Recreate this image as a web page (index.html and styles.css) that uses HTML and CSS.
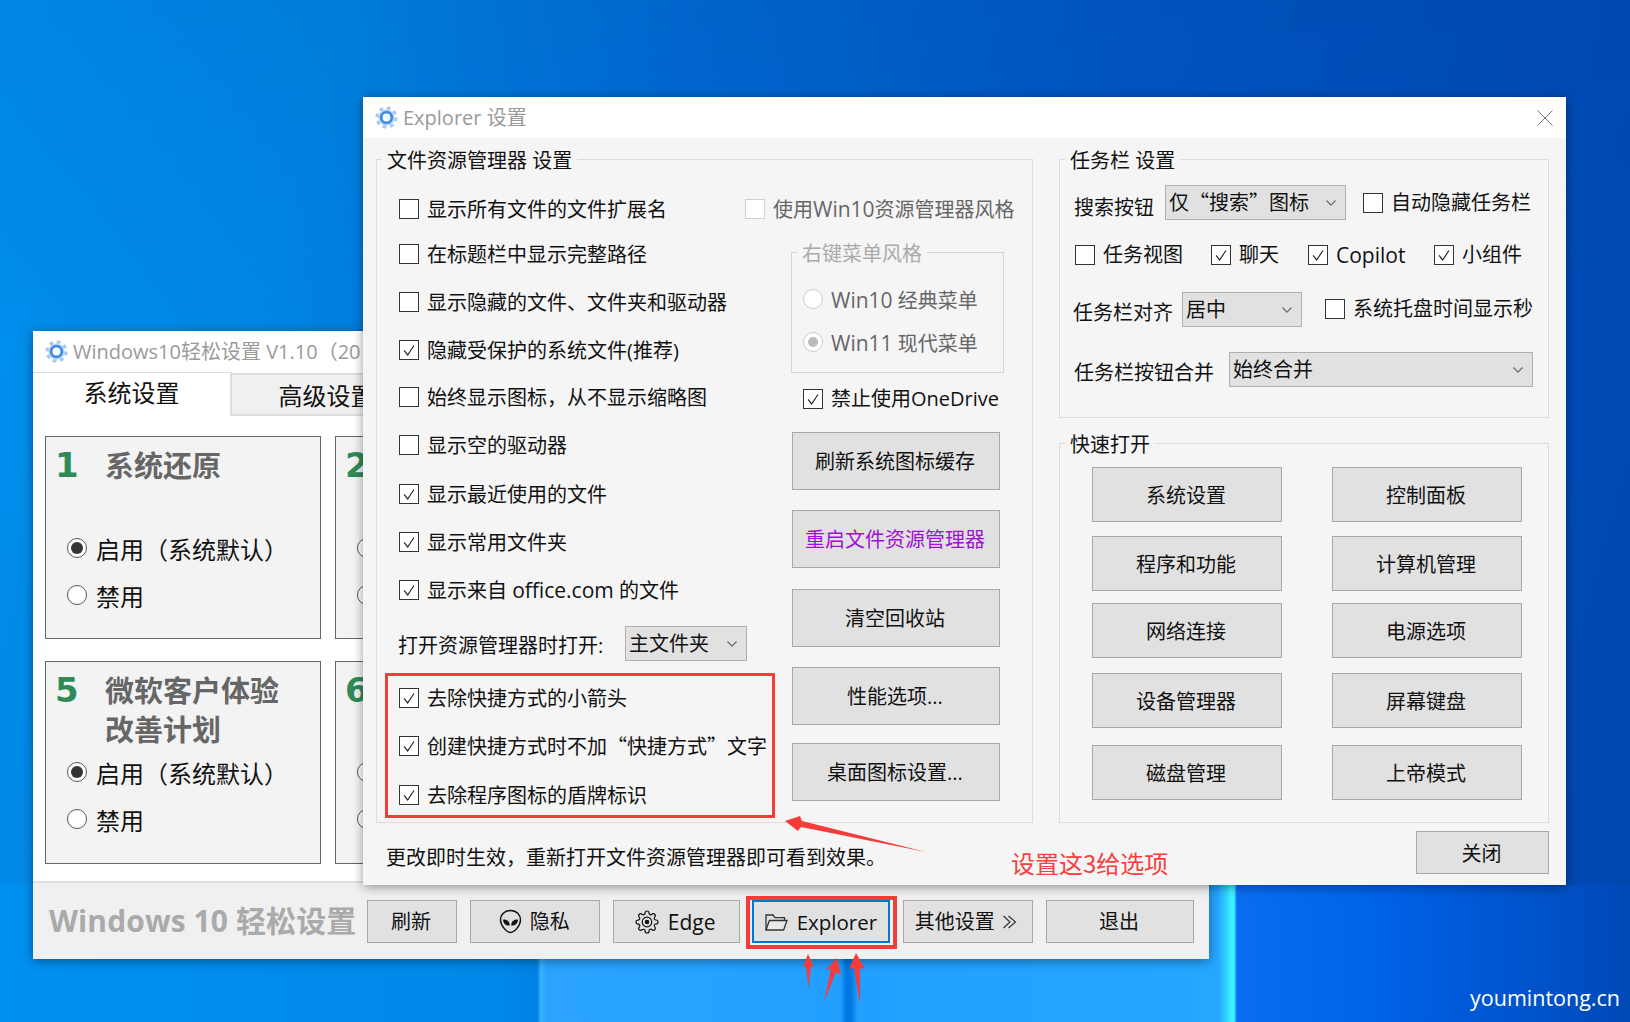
FILE: index.html
```html
<!DOCTYPE html>
<html lang="zh-CN">
<head>
<meta charset="utf-8">
<title>Explorer 设置</title>
<link rel="stylesheet" href="styles.css">
</head>
<body>
<svg class="defs" aria-hidden="true">
  <symbol id="logo" viewBox="0 0 24 24">
    <circle cx="12" cy="12" r="9.4" fill="none" stroke="#a9c8f2" stroke-width="4.4" stroke-dasharray="3.7 3.68"/>
    <circle cx="12" cy="12" r="8.6" fill="#c4d9f6"/>
    <circle cx="12" cy="12" r="5.6" fill="#fff" stroke="#3d8ee8" stroke-width="3"/>
    <circle cx="12" cy="12" r="3" fill="#f2f8ff"/>
  </symbol>
  <symbol id="tick" viewBox="0 0 20 20">
    <path d="M4.5 10.5 8.5 15.5 15.5 5" fill="none" stroke="#222" stroke-width="1.3"/>
  </symbol>
  <symbol id="chev" viewBox="0 0 12 8">
    <path d="M1.5 1.5 6 6.2 10.5 1.5" fill="none" stroke="#666" stroke-width="1.1"/>
  </symbol>
</svg>

<main class="desktop">

  <section class="window back">
    <header class="titlebar">
      <svg class="logo"><use href="#logo"/></svg>
      <span class="title-text">Windows10轻松设置 V1.10（20</span>
    </header>
    <nav class="tabs">
      <div class="tab active">系统设置</div>
      <div class="tab">高级设置</div>
    </nav>
    <div class="cards">
      <article class="card">
        <div class="card-head"><span class="num">1</span><h2>系统还原</h2></div>
        <div class="options">
          <div class="opt"><span class="dot on"></span>启用（系统默认）</div>
          <div class="opt"><span class="dot"></span>禁用</div>
        </div>
      </article>
      <article class="card">
        <div class="card-head"><span class="num">2</span></div>
        <div class="options">
          <div class="opt"><span class="dot"></span></div>
          <div class="opt"><span class="dot"></span></div>
        </div>
      </article>
      <article class="card">
        <div class="card-head"><span class="num">5</span><h2>微软客户体验<br>改善计划</h2></div>
        <div class="options tight">
          <div class="opt"><span class="dot on"></span>启用（系统默认）</div>
          <div class="opt"><span class="dot"></span>禁用</div>
        </div>
      </article>
      <article class="card">
        <div class="card-head"><span class="num">6</span></div>
        <div class="options tight">
          <div class="opt"><span class="dot"></span></div>
          <div class="opt"><span class="dot"></span></div>
        </div>
      </article>
    </div>
    <footer class="bar">
      <div class="brand">Windows 10 轻松设置</div>
      <div class="bar-buttons">
        <button class="btn w-refresh">刷新</button>
        <button class="btn w-privacy">
          <svg class="ico" viewBox="0 0 24 24"><path d="M12 1.5C6.2 1.5 2.4 5.4 2.4 10.6c0 5.4 6 11.9 9.6 11.9s9.6-6.5 9.6-11.9c0-5.2-3.8-9.1-9.6-9.1z" fill="none" stroke="#111" stroke-width="1.4"/><path d="M4.9 10.2c3.8-.3 6.4 1.8 6.4 5.6-3.8.2-6.4-1.9-6.4-5.6zM19.1 10.2c-3.8-.3-6.4 1.8-6.4 5.6 3.8.2 6.4-1.9 6.4-5.6z" fill="#111"/></svg>
          隐私</button>
        <button class="btn w-edge">
          <svg class="ico gear" viewBox="0 0 24 24" fill="none" stroke="#111" stroke-width="1.2"><circle cx="12" cy="12" r="4.8"/><circle cx="12" cy="12" r="1.7" fill="#111"/><path d="M19.4 15a1.65 1.65 0 0 0 .33 1.82l.06.06a2 2 0 0 1 0 2.83 2 2 0 0 1-2.83 0l-.06-.06a1.65 1.65 0 0 0-1.82-.33 1.65 1.65 0 0 0-1 1.51V21a2 2 0 0 1-2 2 2 2 0 0 1-2-2v-.09A1.65 1.65 0 0 0 9 19.4a1.65 1.65 0 0 0-1.82.33l-.06.06a2 2 0 0 1-2.83 0 2 2 0 0 1 0-2.83l.06-.06a1.65 1.65 0 0 0 .33-1.82 1.65 1.65 0 0 0-1.51-1H3a2 2 0 0 1-2-2 2 2 0 0 1 2-2h.09A1.65 1.65 0 0 0 4.6 9a1.65 1.65 0 0 0-.33-1.82l-.06-.06a2 2 0 0 1 0-2.83 2 2 0 0 1 2.83 0l.06.06a1.65 1.65 0 0 0 1.82.33H9a1.65 1.65 0 0 0 1-1.51V3a2 2 0 0 1 2-2 2 2 0 0 1 2 2v.09a1.65 1.65 0 0 0 1 1.51 1.65 1.65 0 0 0 1.82-.33l.06-.06a2 2 0 0 1 2.83 0 2 2 0 0 1 0 2.83l-.06.06a1.65 1.65 0 0 0-.33 1.82V9a1.65 1.65 0 0 0 1.51 1H21a2 2 0 0 1 2 2 2 2 0 0 1-2 2h-.09a1.65 1.65 0 0 0-1.51 1z"/></svg>
          <span class="lat">Edge</span></button>
        <button class="btn w-explorer focus">
          <svg class="ico folder" viewBox="0 0 24 20" fill="none" stroke="#333" stroke-width="1.3"><path d="M2 18V3h7l2 2.6h9.5V8.5"/><path d="M2 18 5.4 8.5H23L19.6 18z" fill="#e8e8e8"/></svg>
          <span class="lat narrow">Explorer</span></button>
        <button class="btn w-other">其他设置
          <svg class="ico more" viewBox="0 0 16 14" fill="none" stroke="#333" stroke-width="1.2"><path d="M1.5 1 8 7 1.5 13M6.5 1 13.5 7 6.5 13"/></svg>
        </button>
        <button class="btn w-exit">退出</button>
      </div>
    </footer>
  </section>

  <section class="window front">
    <header class="titlebar">
      <svg class="logo"><use href="#logo"/></svg>
      <span class="title-text">Explorer 设置</span>
      <svg class="close-x" viewBox="0 0 16 16"><path d="M.5.5 15.5 15.5M15.5.5.5 15.5" stroke="#777" fill="none"/></svg>
    </header>
    <div class="front-body">
      <fieldset class="group explorer-group">
        <legend>文件资源管理器 设置</legend>
        <div class="explorer-cols">
          <div class="option-list">
            <label class="check"><span class="box"></span><span>显示所有文件的文件扩展名</span></label>
            <label class="check"><span class="box"></span><span>在标题栏中显示完整路径</span></label>
            <label class="check"><span class="box"></span><span>显示隐藏的文件、文件夹和驱动器</span></label>
            <label class="check"><span class="box"><svg><use href="#tick"/></svg></span><span>隐藏受保护的系统文件(推荐)</span></label>
            <label class="check"><span class="box"></span><span>始终显示图标，从不显示缩略图</span></label>
            <label class="check"><span class="box"></span><span>显示空的驱动器</span></label>
            <label class="check"><span class="box"><svg><use href="#tick"/></svg></span><span>显示最近使用的文件</span></label>
            <label class="check"><span class="box"><svg><use href="#tick"/></svg></span><span>显示常用文件夹</span></label>
            <label class="check flat"><span class="box"><svg><use href="#tick"/></svg></span><span>显示来自 <span class="lat">office.com</span> 的文件</span></label>
            <div class="open-row">
              <span class="open-label">打开资源管理器时打开:</span>
              <div class="select w-open">主文件夹<svg class="chev"><use href="#chev"/></svg></div>
            </div>
            <label class="check"><span class="box"><svg><use href="#tick"/></svg></span><span>去除快捷方式的小箭头</span></label>
            <label class="check flat"><span class="box"><svg><use href="#tick"/></svg></span><span>创建快捷方式时不加<span class="cjk">“</span>快捷方式<span class="cjk">”</span>文字</span></label>
            <label class="check"><span class="box"><svg><use href="#tick"/></svg></span><span>去除程序图标的盾牌标识</span></label>
          </div>
          <div class="side-col">
            <label class="check disabled flat"><span class="box"></span><span>使用<span class="lat">Win10</span>资源管理器风格</span></label>
            <fieldset class="group menu-style">
              <legend>右键菜单风格</legend>
              <div class="radio-row"><span class="dot"></span><span><span class="lat">Win10</span> 经典菜单</span></div>
              <div class="radio-row"><span class="dot on"></span><span><span class="lat">Win11</span> 现代菜单</span></div>
            </fieldset>
            <label class="check onedrive flat"><span class="box"><svg><use href="#tick"/></svg></span><span>禁止使用OneDrive</span></label>
            <div class="tool-stack">
              <button class="btn">刷新系统图标缓存</button>
              <button class="btn purple">重启文件资源管理器</button>
              <button class="btn">清空回收站</button>
              <button class="btn">性能选项...</button>
              <button class="btn">桌面图标设置...</button>
            </div>
          </div>
        </div>
      </fieldset>

      <div class="right-col">
        <fieldset class="group taskbar-group">
          <legend>任务栏 设置</legend>
          <div class="tb-row r1">
            <span class="tb-label">搜索按钮</span>
            <div class="select w-search"><span>仅<span class="cjk">“</span>搜索<span class="cjk">”</span>图标</span><svg class="chev"><use href="#chev"/></svg></div>
            <label class="check autohide"><span class="box"></span><span>自动隐藏任务栏</span></label>
          </div>
          <div class="tb-row r2">
            <label class="check"><span class="box"></span><span>任务视图</span></label>
            <label class="check"><span class="box"><svg><use href="#tick"/></svg></span><span>聊天</span></label>
            <label class="check"><span class="box"><svg><use href="#tick"/></svg></span><span class="lat">Copilot</span></label>
            <label class="check"><span class="box"><svg><use href="#tick"/></svg></span><span>小组件</span></label>
          </div>
          <div class="tb-row r3">
            <span class="tb-label">任务栏对齐</span>
            <div class="select w-align">居中<svg class="chev"><use href="#chev"/></svg></div>
            <label class="check seconds"><span class="box"></span><span>系统托盘时间显示秒</span></label>
          </div>
          <div class="tb-row r4">
            <span class="tb-label">任务栏按钮合并</span>
            <div class="select w-merge">始终合并<svg class="chev"><use href="#chev"/></svg></div>
          </div>
        </fieldset>
        <fieldset class="group quick-group">
          <legend>快速打开</legend>
          <div class="quick-grid">
            <button class="btn">系统设置</button><button class="btn">控制面板</button>
            <button class="btn">程序和功能</button><button class="btn">计算机管理</button>
            <button class="btn">网络连接</button><button class="btn">电源选项</button>
            <button class="btn">设备管理器</button><button class="btn">屏幕键盘</button>
            <button class="btn">磁盘管理</button><button class="btn">上帝模式</button>
          </div>
        </fieldset>
      </div>

      <p class="status">更改即时生效，重新打开文件资源管理器即可看到效果。</p>
      <div class="close-wrap"><button class="btn w-close">关闭</button></div>
    </div>
  </section>

  <svg class="marks" viewBox="0 0 1630 1022" aria-hidden="true">
    <rect x="386.5" y="674.5" width="387" height="142" fill="none" stroke="#f63b3b" stroke-width="3"/>
    <rect x="748" y="898" width="147" height="49" fill="none" stroke="#f63b3b" stroke-width="4"/>
    <polygon fill="#f63b3b" points="785,821 800,816 802,821 926,852 801,827 798,831"/>
    <polygon fill="#f63b3b" points="808,954 814,967 811,966 808.5,989 806,966 803,967"/>
    <polygon fill="#f63b3b" points="837,958 841,975 836,972 824,1002 831,969 826,970"/>
    <polygon fill="#f63b3b" points="856,953 865,969 860,968 860,1004 854,968 849,969"/>
  </svg>
  <div class="note">设置这3给选项</div>
  <div class="watermark">youmintong.cn</div>
</main>
</body>
</html>
```

FILE: styles.css
```css
* { box-sizing: border-box; }
html, body { margin: 0; padding: 0; }
body {
  font-family: "Open Sans", "Noto Sans CJK SC", sans-serif;
  font-size: 20px;
  line-height: 28px;
  color: #111;
}
.defs { position: absolute; width: 0; height: 0; }
.cjk { font-family: "Noto Sans CJK SC", sans-serif; }
.lat { font-size: 21px; }
.lat.narrow { font-size: 20.5px; }

/* desktop */
.desktop {
  position: relative;
  width: 1630px;
  height: 1022px;
  overflow: hidden;
  background:
    linear-gradient(90deg,
      #0090f0 0, #0088e8 500px, #0080e2 537px, #38b4ff 541px, #2aa4ff 546px,
      #22a0ff 840px, #0078e2 846px, #0078e2 851px, #22a0ff 858px,
      #25a6ff 1218px, #30d0ff 1226px, #3ff0ff 1231px, #3ff0ff 1234px, #0a6cf0 1237px,
      #0062e8 1380px, #0049b8 1630px) left bottom / 100% 137px no-repeat,
    linear-gradient(180deg, rgba(0, 40, 130, .1) 0, rgba(0, 40, 130, 0) 340px),
    linear-gradient(105deg, #0090ee 0, #0086e4 18%, #006cd4 36%, #0058c4 58%, #004eba 80%, #0046b0 100%);
}
.window {
  position: absolute;
  box-shadow: 0 2px 10px rgba(0, 0, 0, .4);
}
.back {
  left: 33px; top: 331px; width: 1176px; height: 628px;
  background: #fff;
  overflow: hidden;
}
.front {
  left: 363px; top: 97px; width: 1203px; height: 788px;
  background: #f5f5f5;
}

/* title bars */
.titlebar {
  display: flex;
  align-items: center;
  height: 41px;
  padding: 0 13px 0 12px;
  background: #fff;
}
.logo { width: 23px; height: 23px; flex: none; }
.title-text { margin-left: 5px; color: #9a9a9a; white-space: nowrap; }
.close-x { width: 16px; height: 16px; margin-left: auto; }

/* back window */
.tabs { display: flex; height: 44px; }
.tab {
  width: 199px;
  font-size: 24px;
  text-align: center;
  padding: 7px 10px 0 0;
  background: #f0f0f0;
  border-top: 2px solid #ddd;
  border-bottom: 2px solid #ddd;
  margin-top: 1px;
}
.tab.active {
  background: #fff;
  margin-top: 0;
  border-top: 1px solid #ddd;
  border-right: 2px solid #ddd;
  border-bottom: 0;
  padding: 6px 0 0;
}
.cards {
  display: grid;
  grid-template-columns: 276px 276px;
  grid-template-rows: 203px 203px;
  column-gap: 14px;
  row-gap: 22px;
  height: 465px;
  padding: 20px 0 0 12px;
}
.card {
  background: #f3f3f3;
  border: 1px solid #666;
  padding-top: 10px;
}
.card-head {
  display: flex;
  min-height: 78px;
  padding-left: 9px;
}
.num {
  width: 50px;
  flex: none;
  margin-top: -1px;
  font-family: "DejaVu Sans", sans-serif;
  font-size: 34px;
  font-weight: 700;
  line-height: 39px;
  color: #2e8b57;
}
.card h2 {
  margin: -2px 0 0;
  font-family: "Noto Sans CJK SC", sans-serif;
  font-size: 29px;
  line-height: 39px;
  font-weight: 700;
  color: #666;
}
.options { display: flex; flex-direction: column; gap: 17px; margin-top: 10px; padding-left: 21px; }
.options.tight { margin-top: 9px; }
.opt {
  display: flex;
  align-items: center;
  height: 30px;
  gap: 9px;
  font-size: 24px;
  white-space: nowrap;
}
.opt .dot { margin-bottom: 4px; }
.dot {
  position: relative;
  flex: none;
  width: 20px;
  height: 20px;
  border: 1px solid #555;
  border-radius: 50%;
  background: #fff;
}
.dot.on::after {
  content: "";
  position: absolute;
  inset: 3px;
  border-radius: 50%;
  background: #333;
}
.bar {
  display: flex;
  height: 78px;
  padding: 17px 15px 0 16px;
  background: #f0f0f0;
  border-top: 2px solid #ddd;
}
.brand {
  font-size: 30px;
  font-weight: 700;
  line-height: 42px;
  color: #aaa;
  white-space: nowrap;
  letter-spacing: .1px;
}
.bar-buttons { display: flex; gap: 12.8px; height: 43px; margin-left: auto; }

/* buttons */
.btn {
  display: flex;
  align-items: center;
  justify-content: center;
  gap: 9px;
  margin: 0;
  padding: 2px 2px 0 0;
  font: inherit;
  color: #111;
  background: #e1e1e1;
  border: 1px solid #a8a8a8;
  white-space: nowrap;
}
.bar-buttons .btn { padding-top: 0; }
.w-refresh { width: 90px; }
.w-privacy { width: 130px; gap: 7px; }
.w-edge { width: 127px; }
.w-explorer { width: 138px; }
.bar-buttons .w-other { width: 130px; gap: 7px; padding-right: 4px; }
.w-exit { width: 148px; }
.w-close { width: 133px; height: 43px; }
.bar-buttons .focus { border: 2px solid #0078d7; }
.tool-stack .purple { color: #a010d8; }
.ico { width: 25px; height: 25px; flex: none; }
.ico.gear { width: 24px; height: 24px; }
.ico.folder { height: 20px; width: 24px; }
.ico.more { width: 16px; height: 14px; }

/* front window */
.front-body {
  display: grid;
  grid-template-columns: 657px 490px;
  grid-template-rows: 678px auto;
  column-gap: 26px;
  height: 747px;
  padding: 7px 0 0 13px;
}
.group {
  margin: 0;
  padding: 0;
  min-width: 0;
  border: 1px solid #dcdcdc;
}
.group > legend {
  height: 28px;
  margin-left: 5px;
  padding: 2px 5px 0;
  line-height: 28px;
  white-space: nowrap;
}
.explorer-cols {
  display: grid;
  grid-template-columns: 346px 1fr;
  padding: 22px 0 0 22px;
}
.check {
  display: flex;
  align-items: center;
  gap: 8px;
  height: 28px;
  white-space: nowrap;
}
.explorer-cols .check > span:last-child,
.radio-row > span:last-child { padding-top: 2px; }
.explorer-cols .check.flat > span:last-child { padding-top: 0; }
.box {
  flex: none;
  width: 20px;
  height: 20px;
  background: #fff;
  border: 1px solid #333;
}
.box svg { display: block; width: 18px; height: 18px; }
.option-list {
  display: grid;
  grid-template-rows: 45px 48px 48px 47px 48px 49px 48px 48px 56px 52px 48px 49px 28px;
  align-items: start;
}
.open-row { display: flex; align-items: center; height: 28px; margin-left: -1px; }
.open-label { width: 227px; white-space: nowrap; }
.select {
  display: flex;
  align-items: center;
  flex: none;
  height: 35px;
  padding: 0 8px 0 3px;
  background: #e1e1e1;
  border: 1px solid #b0b0b0;
  white-space: nowrap;
}
.chev { width: 12px; height: 8px; margin-left: auto; }
.open-row .w-open { width: 122px; margin-top: -5px; }
.w-search { width: 181px; }
.w-align { width: 120px; }
.w-merge { width: 304px; }
.disabled { color: #666; }
.disabled .box { border-color: #d0d0d0; }
.side-col { display: flex; flex-direction: column; }
.menu-style {
  width: 213px;
  height: 135px;
  margin: 15px 0 0 46px;
  border-color: #d6d6d6;
}
.menu-style > legend { color: #aaa; }
.radio-row {
  display: flex;
  align-items: center;
  gap: 8px;
  height: 28px;
  margin: 15px 0 0 11px;
  color: #666;
  white-space: nowrap;
}
.radio-row:first-of-type { margin-top: 19px; }
.radio-row .dot { border-color: #ccc; }
.radio-row .dot.on::after { background: #bbb; inset: 4px; }
.onedrive { margin: 12px 0 0 58px; }
.tool-stack {
  display: grid;
  grid-template-rows: 78px 79px 78px 76px 58px;
  margin: 19px 0 0 47px;
  width: 208px;
}
.tool-stack .btn { height: 58px; }

.right-col { display: flex; flex-direction: column; }
.taskbar-group { height: 273px; }
.tb-row { display: flex; align-items: flex-start; }
.tb-row.r1 { height: 35px; margin-top: 12px; padding-left: 14px; }
.tb-label { margin-top: 7px; white-space: nowrap; }
.r1 .tb-label { margin-top: 9px; }
.r1 .select { margin-left: 11px; }
.autohide { margin: 4px 0 0 17px; }
.tb-row.r2 {
  display: grid;
  grid-template-columns: 136px 97px 126px auto;
  margin-top: 21px;
  padding-left: 15px;
}
.tb-row.r3 { margin-top: 23px; padding-left: 13px; }
.r3 .select { margin-left: 9px; }
.seconds { margin: 3px 0 0 23px; }
.tb-row.r4 { margin-top: 25px; padding-left: 14px; }
.r4 .select { margin-left: 15px; }
.quick-group { height: 394px; margin-top: 11px; }
.quick-grid {
  display: grid;
  grid-template-columns: 190px 190px;
  grid-template-rows: 69px 67px 70px 72px 55px;
  column-gap: 50px;
  padding: 10px 0 0 32px;
}
.quick-grid .btn { height: 55px; }

.status { margin: 21px 0 0 10px; white-space: nowrap; }
.close-wrap { display: flex; justify-content: flex-end; padding-top: 8px; }

/* annotations */
.marks { position: absolute; inset: 0; width: 1630px; height: 1022px; }
.note {
  position: absolute;
  left: 1011px;
  top: 845px;
  font-family: "Noto Sans CJK SC", sans-serif;
  font-size: 24px;
  line-height: 36px;
  color: #f64040;
}
.watermark {
  position: absolute;
  right: 10px;
  top: 982px;
  font-size: 21.5px;
  line-height: 32px;
  color: #fff;
}
```
